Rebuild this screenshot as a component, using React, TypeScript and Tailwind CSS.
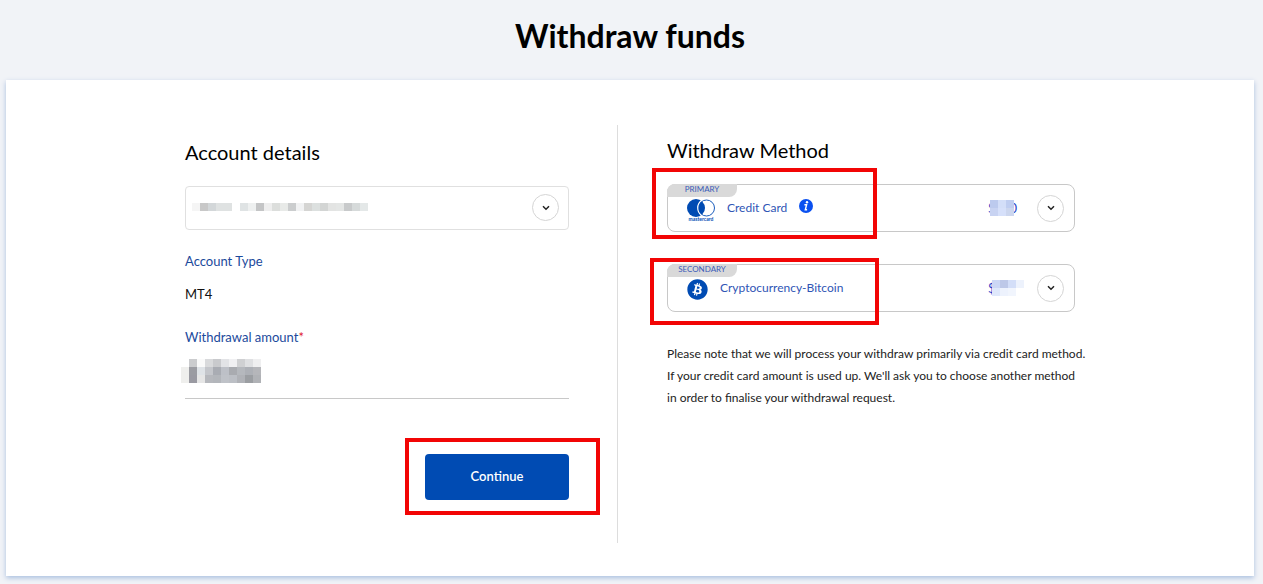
import React from "react";
import { FaBitcoin } from "react-icons/fa";
import clsx from "clsx";

const accountPixels = [
  [
    "#f5f5f5", "#c8c8c8", "#d3d7d9", "#dfe2e2", "#dfe2e2", "", "#dfe3e4", "#eef0f0",
    "#c4c5c6", "#eeeeee", "#dcdedc", "#e8eae8", "#cbcdce", "#f1f2f3", "#d5d5d3",
    "#dce0df", "#d3d5d4", "#e3e4e3", "#e4e6e5", "#c8cacb", "#d6dada", "#e4e8e8",
  ],
];

const amountPixels = [
  ["", "#cbccce", "#fafafa", "#d9dadc", "#c9cacd", "#e2e3e6", "#f0f0f2", "#cfd0d2", "#dfe0e2", "#efeff0"],
  ["#efefed", "#9b9ca2", "#dfe3e7", "#c4c6cb", "#a9acb3", "#bdc0c7", "#a9abb0", "#b5b8bd", "#adb0b6", "#b5b6ba"],
  ["#efefed", "#9a9aa2", "#e6e6e6", "#b6b8bd", "#b3b6bb", "#bfc2c8", "#bcbfc5", "#b0b2b7", "#9b9ea2", "#b0b2b6"],
];

const primaryPixels = [
  ["#bccaee", "#d3def8", "#bfcdf0"],
  ["#c8d3f2", "#d6e0fa", "#ccd6ee"],
];

const secondaryPixels = [
  ["#ccd7f5", "#bdc8e8", "#d3def8", "#edf2fc"],
  ["#dfe8fb", "#edf2fd", "#f1f5fd", ""],
];

const Mosaic = ({ rows, className }: { rows: string[][]; className?: string }) => (
  <svg
    width={rows[0].length * 8}
    height={rows.length * 8}
    shapeRendering="crispEdges"
    aria-hidden="true"
    className={clsx("pointer-events-none absolute", className)}
  >
    {rows.map((row, y) =>
      row.map((color, x) => (
        <rect key={`${x}-${y}`} x={x * 8} y={y * 8} width="8" height="8" fill={color || "none"} />
      ))
    )}
  </svg>
);

const Highlight = ({ className }: { className: string }) => (
  <div className={clsx("pointer-events-none absolute z-10 border-4 border-[#f20505]", className)} />
);

const Chevron = () => (
  <svg width="8" height="6" viewBox="0 0 8 6" fill="none" stroke="#222" strokeWidth="1.5" aria-hidden="true">
    <path d="M1 1.2 4 4.2 7 1.2" />
  </svg>
);

const InfoIcon = () => (
  <svg width="14" height="14" viewBox="0 0 14 14" aria-hidden="true">
    <circle cx="7" cy="7" r="7" fill="#0a50f0" />
    <circle cx="8" cy="3.2" r="1.2" fill="#fff" />
    <path d="M5.4 5.7h2.2L6.3 10.8h1.8" fill="none" stroke="#fff" strokeWidth="1.4" />
  </svg>
);

const MastercardLogo = () => (
  <div className="mt-1 flex w-7 flex-col items-center text-[#004bb3]">
    <svg width="28" height="18" viewBox="0 0 28 18" aria-hidden="true">
      <circle cx="19.5" cy="9" r="8" fill="#fff" stroke="currentColor" strokeWidth="0.9" />
      <circle cx="9" cy="9" r="9" fill="currentColor" />
      <path d="M14.6 1.6a9 9 0 0 0 0 14.8" fill="none" stroke="#fff" strokeWidth="1.2" />
    </svg>
    <span className="text-[5px] leading-[4px] font-bold">mastercard</span>
  </div>
);

type MethodProps = {
  tag: string;
  name: string;
  icon: React.ReactNode;
  amount: React.ReactNode;
  info?: boolean;
  highlight: string;
};

const Method = ({ tag, name, icon, amount, info, highlight }: MethodProps) => (
  <div className="relative flex h-12 items-center rounded-lg border border-[#c8c8c8] pr-2.5 pl-[19px]">
    <span className="absolute -top-px -left-px flex h-[13px] w-[70px] items-center justify-center rounded-tl-lg rounded-br-lg bg-[#d9d9d9] pb-1 text-[8px] leading-2 text-[#3a5bb8]">
      {tag}
    </span>
    {icon}
    <span className="ml-3 text-xs text-[#2f55b5]">{name}</span>
    {info && (
      <button type="button" aria-label="More information" className="mb-1 ml-3">
        <InfoIcon />
      </button>
    )}
    <div className="relative ml-auto flex h-4 w-[29px] items-center justify-between text-[13px] leading-4 text-[#2743c8]">
      {amount}
    </div>
    <button
      type="button"
      aria-label={`Show ${name} options`}
      className="ml-5 flex size-[27px] items-center justify-center rounded-full border border-[#d5d5d5]"
    >
      <Chevron />
    </button>
    <Highlight className={highlight} />
  </div>
);

const App = () => {
  return (
    <div className="min-h-screen bg-[#f1f3f7] pr-[9px] pb-2 pl-1.5 font-['Lato','Liberation_Sans',sans-serif] text-black">
      <h1 className="flex h-20 items-center justify-center pb-2 text-[32px] leading-10 font-bold">
        Withdraw funds
      </h1>

      <main className="bg-white px-6 pt-[45px] pb-[33px] shadow-[0_2px_5px_#a9bfdf]">
        <div className="mx-auto grid max-w-[890px] grid-cols-[433fr_457fr]">
          <form className="min-w-0 border-r border-[#dddddd] pr-12 pb-[43px]">
            <h2 className="pt-[15px] text-[20px] leading-6">Account details</h2>

            <div className="relative mt-[22px]">
              <select
                aria-label="Account"
                className="h-11 w-full appearance-none rounded border border-[#e0e0e0] bg-white px-2"
              >
                <option aria-label="Selected account"></option>
              </select>
              <Mosaic rows={accountPixels} className="top-[17px] left-[7px]" />
              <span className="pointer-events-none absolute top-2 right-2.5 flex size-[27px] items-center justify-center rounded-full border border-[#d5d5d5]">
                <Chevron />
              </span>
            </div>

            <p className="mt-[21px] text-[13px] leading-5 text-[#1c4a9c]">Account Type</p>
            <p className="mt-[13px] text-[13px] leading-5 text-[#111]">MT4</p>

            <label htmlFor="amount" className="mt-[23px] block text-[13px] leading-5 text-[#1c4a9c]">
              Withdrawal amount<span className="text-[#e02030]">*</span>
            </label>
            <div className="relative">
              <input
                id="amount"
                type="text"
                required
                className="block h-[52px] w-full border-b border-[#c8c8c8] outline-none"
              />
              <Mosaic rows={amountPixels} className="top-3 -left-1" />
            </div>

            <div className="relative mt-[55px] ml-auto w-36">
              <button type="submit" className="block h-[46px] w-full rounded bg-[#004bb3] text-[13px] font-semibold text-white">
                Continue
              </button>
              <Highlight className="-top-4 -left-5 h-[77px] w-[195px]" />
            </div>
          </form>

          <section className="min-w-0 pl-[49px]">
            <h2 className="pt-[13px] text-[20px] leading-6">Withdraw Method</h2>

            <div className="mt-[22px] space-y-8">
              <Method
                tag="PRIMARY"
                name="Credit Card"
                icon={<MastercardLogo />}
                info
                amount={
                  <>
                    <span>$</span>
                    <span>0</span>
                    <Mosaic rows={primaryPixels} className="top-0 left-0.5" />
                  </>
                }
                highlight="-top-[17px] -left-4 h-[71px] w-[225px]"
              />
              <Method
                tag="SECONDARY"
                name="Cryptocurrency-Bitcoin"
                icon={<FaBitcoin size={21} className="mt-0.5 text-[#004bb3]" />}
                amount={
                  <>
                    <span>$</span>
                    <Mosaic rows={secondaryPixels} className="top-0 left-1" />
                  </>
                }
                highlight="-top-[7px] -left-[18px] h-[67px] w-[229px]"
              />
            </div>

            <p className="mt-[31px] text-xs leading-[22px] text-[#222] lg:whitespace-nowrap">
              Please note that we will process your withdraw primarily via credit card method.
              <br />
              If your credit card amount is used up. We'll ask you to choose another method
              <br />
              in order to finalise your withdrawal request.
            </p>
          </section>
        </div>
      </main>
    </div>
  );
};

export default App;
